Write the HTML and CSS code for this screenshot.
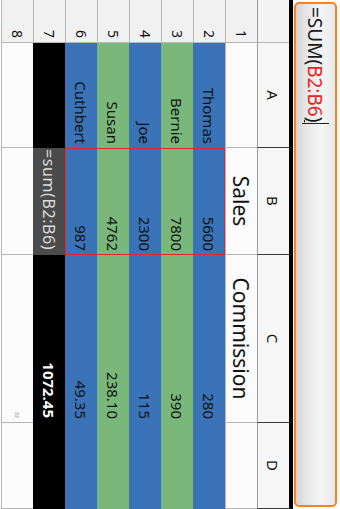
FILE: index.html
```html
<!DOCTYPE html>
<html>
<head>
<meta charset="utf-8">
<link rel="stylesheet" href="styles.css">
</head>
<body>
<div class="frame">
<div class="screen">
  <div class="formula-area">
    <div class="formula-box"><span>=SUM(</span><span class="ref">B2:B6</span><span class="paren">)</span><span class="cursor"></span></div>
  </div>
  <div class="sheet">
    <div class="c corner"></div>
    <div class="c h">A</div>
    <div class="c h">B</div>
    <div class="c h">C</div>
    <div class="c h">D</div>

    <div class="c rn">1</div>
    <div class="c"></div>
    <div class="c title">Sales</div>
    <div class="c title">Commission</div>
    <div class="c"></div>

    <div class="c rn">2</div>
    <div class="c blue">Thomas</div>
    <div class="c blue sel sel-top">5600</div>
    <div class="c blue">280</div>
    <div class="c blue"></div>

    <div class="c rn">3</div>
    <div class="c green">Bernie</div>
    <div class="c green sel">7800</div>
    <div class="c green">390</div>
    <div class="c green"></div>

    <div class="c rn">4</div>
    <div class="c blue">Joe</div>
    <div class="c blue sel">2300</div>
    <div class="c blue">115</div>
    <div class="c blue"></div>

    <div class="c rn">5</div>
    <div class="c green">Susan</div>
    <div class="c green sel">4762</div>
    <div class="c green">238.10</div>
    <div class="c green"></div>

    <div class="c rn">6</div>
    <div class="c blue">Cuthbert</div>
    <div class="c blue sel sel-bot">987</div>
    <div class="c blue">49.35</div>
    <div class="c blue"></div>

    <div class="c rn">7</div>
    <div class="c black"></div>
    <div class="c fcell">=sum(B2:B6)</div>
    <div class="c black total">1072.45</div>
    <div class="c black"></div>

    <div class="c rn">8</div>
    <div class="c"></div>
    <div class="c"></div>
    <div class="c mark"><span class="tiny">ss</span></div>
    <div class="c"></div>
  </div>
</div>
</div>
</body>
</html>
```
FILE: styles.css
```css
html, body {
  margin: 0;
  padding: 0;
  width: 340px;
  height: 509px;
  overflow: hidden;
  background: #ffffff;
}

.frame {
  width: 340px;
  height: 509px;
  overflow: hidden;
}

.screen {
  width: 509px;
  height: 340px;
  transform-origin: 0 0;
  transform: translateX(340px) rotate(90deg);
  font-family: "Noto Sans", "Open Sans", sans-serif;
  background: #ffffff;
}

.formula-area {
  height: 51px;
  box-sizing: border-box;
  padding: 3px 2px 1px 2px;
  border-bottom: 4px solid #000000;
}

.formula-box {
  height: 43px;
  box-sizing: border-box;
  border: 2px solid #f7841c;
  border-radius: 5px;
  background: linear-gradient(#e9e9e9, #f5f5f5 35%, #e6e6e6 75%, #d4d4d4);
  display: flex;
  align-items: center;
  padding-left: 3px;
  font-size: 19px;
  color: #1a1a1a;
}

.ref {
  color: #ee2222;
}

.paren {
  text-decoration: underline;
  text-underline-offset: 3px;
  text-decoration-thickness: 1px;
}

.cursor {
  width: 1px;
  height: 27px;
  background: #222222;
  margin-left: 1px;
}

.sheet {
  display: grid;
  grid-template-columns: 43px 105px 107px 168px 86px;
  grid-template-rows: repeat(9, 32px);
}

.c {
  box-sizing: border-box;
  border-right: 1px solid #b6b6b6;
  border-bottom: 1px solid #b6b6b6;
  background: #fbfbfb;
  display: flex;
  align-items: center;
  justify-content: flex-end;
  padding-right: 4px;
  font-size: 15px;
  color: #111111;
  white-space: nowrap;
  overflow: hidden;
}

.corner {
  background: #f3f3f3;
  border-bottom-color: #9a9a9a;
}

.h {
  justify-content: center;
  padding-right: 0;
  background: #f6f6f6;
  border-right-color: #3a3a3a;
  border-bottom-color: #9a9a9a;
  font-size: 15px;
}

.rn {
  background: #f1f1f1;
  font-size: 14px;
  padding-right: 4px;
}

.title {
  justify-content: center;
  padding-right: 0;
  font-size: 21px;
}

.blue {
  background: #3a73b8;
  border: 0;
}

.green {
  background: #79b87a;
  border: 0;
}

.black {
  background: #000000;
  border: 0;
}

.total {
  color: #ffffff;
  font-weight: bold;
  padding-right: 5px;
}

.fcell {
  background: #4b4b4b;
  border: 0;
  color: #dcdcdc;
  justify-content: flex-start;
  padding-left: 1px;
  padding-right: 0;
  font-size: 16px;
  letter-spacing: 0.6px;
}

.sel {
  box-shadow: inset 1px 0 #e02828, inset -1px 0 #e02828;
}

.sel-top {
  box-shadow: inset 1px 0 #e02828, inset -1px 0 #e02828, inset 0 1px #e02828;
}

.sel-bot {
  box-shadow: inset 1px 0 #e02828, inset -1px 0 #e02828, inset 0 -1px #e02828;
}

.tiny {
  font-size: 7px;
  font-style: italic;
  color: #9a9a9a;
}
```
